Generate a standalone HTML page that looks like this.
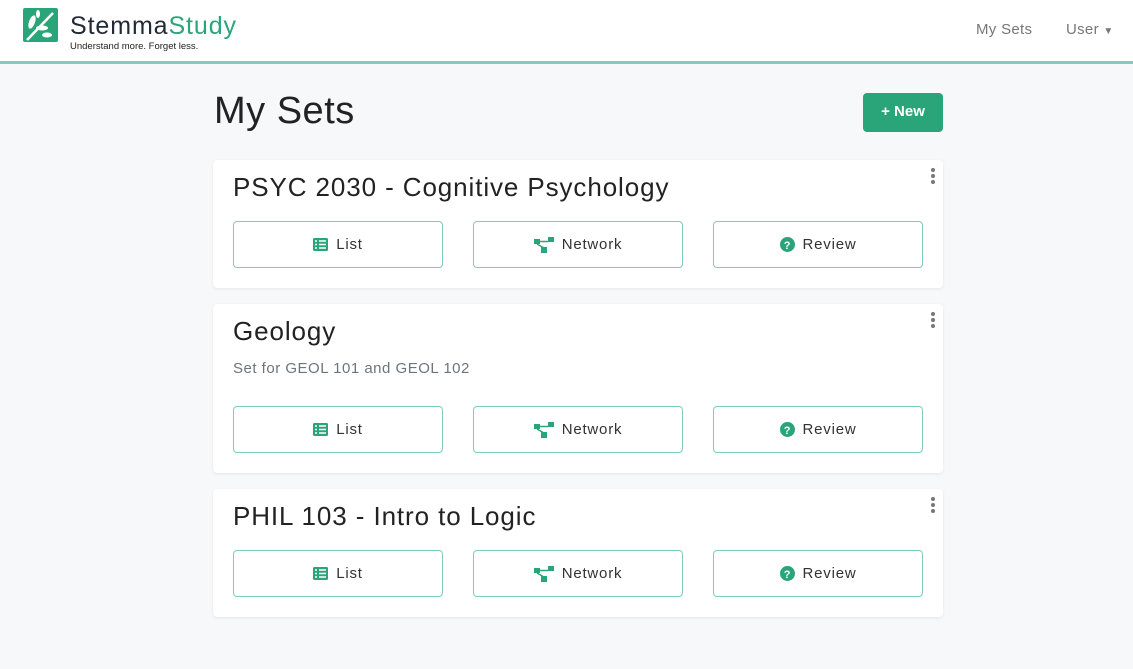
<!DOCTYPE html>
<html><head><style>
*{box-sizing:border-box;margin:0;padding:0}
body{width:1133px;height:669px;background:#f7f8fa;font-family:"Liberation Sans",sans-serif;color:#212529;position:relative;overflow:hidden}
.nav{position:absolute;left:0;top:0;width:1133px;height:64px;background:#fff;border-bottom:3px solid #7ecbc0}
.brand{position:absolute;left:70px;top:12px;font-size:25px;color:#222a35;letter-spacing:.9px}
.brand span{color:#2aa57a}
.tag{position:absolute;left:70px;top:41px;font-size:9.5px;color:#222}
.nl{position:absolute;top:21px;font-size:15px;color:#777;letter-spacing:.3px}
h1{position:absolute;left:214px;top:90px;font-size:38px;font-weight:400;color:#222;letter-spacing:.5px}
.new{position:absolute;left:863px;top:93px;width:80px;height:39px;background:#2aa57a;border-radius:4px;color:#fff;font-size:15px;font-weight:bold;text-align:center;line-height:38px}
.card{position:absolute;left:213px;width:730px;background:#fff;border-radius:4px;box-shadow:0 1px 3px rgba(0,0,0,.08)}
.card h2{position:absolute;left:20px;top:12px;font-size:26px;font-weight:400;color:#222;letter-spacing:.9px}
.desc{position:absolute;left:20px;top:56px;font-size:15px;color:#6c757d;letter-spacing:.5px}
.dots{position:absolute;right:8px;top:8px;width:4px}
.dots i{display:block;width:4px;height:4px;border-radius:2px;background:#777;margin-bottom:2px}
.b{position:absolute;width:210px;height:47px;border:1px solid #7ecbc0;border-radius:4px;font-size:15px;color:#333;display:flex;align-items:center;justify-content:center;gap:8px;letter-spacing:.8px}
</style></head><body>
<div class="nav">
<svg style="position:absolute;left:23px;top:8px" width="35" height="34" viewBox="0 0 35 34"><rect width="35" height="34" rx="2" fill="#2aa57a"/><path d="M4 32 L30 5" stroke="#fff" stroke-width="2.5"/><ellipse cx="9" cy="14" rx="3" ry="7" fill="#fff" transform="rotate(20 9 14)"/><ellipse cx="19" cy="20" rx="6" ry="2.5" fill="#fff"/><ellipse cx="24" cy="27" rx="5" ry="2.5" fill="#fff"/><ellipse cx="15" cy="6" rx="2" ry="4" fill="#fff"/></svg>
<div class="brand">Stemma<span>Study</span></div>
<div class="tag">Understand more. Forget less.</div>
<div class="nl" style="left:976px">My Sets</div>
<div class="nl" style="left:1066px">User <span style="font-size:10px">▼</span></div>
</div>
<h1>My Sets</h1>
<div class="new">+ New</div>

<div class="card" style="top:160px;height:128px"><h2>PSYC 2030 - Cognitive Psychology</h2><div class="dots"><i></i><i></i><i></i></div>
<div class="b" style="left:20px;top:61px"><svg width="15" height="13"><rect width="15" height="13" rx="1.5" fill="#2aa57a"/><path d="M2 3h2M2 6.5h2M2 10h2M6 3h7M6 6.5h7M6 10h7" stroke="#fff" stroke-width="1.6"/></svg>List</div>
<div class="b" style="left:260px;top:61px"><svg width="20" height="16"><rect x="0" y="2" width="6" height="5" fill="#2aa57a"/><rect x="14" y="0" width="6" height="5" fill="#2aa57a"/><rect x="7" y="10" width="6" height="6" fill="#2aa57a"/><path d="M6 4.5h8M3 7l7 4" stroke="#2aa57a" stroke-width="1.5"/></svg>Network</div>
<div class="b" style="left:500px;top:61px"><svg width="15" height="15"><circle cx="7.5" cy="7.5" r="7.5" fill="#2aa57a"/><text x="7.5" y="12" font-size="11" font-weight="bold" fill="#fff" text-anchor="middle" font-family="Liberation Sans">?</text></svg>Review</div>
</div>

<div class="card" style="top:304px;height:169px"><h2>Geology</h2><div class="desc">Set for GEOL 101 and GEOL 102</div><div class="dots"><i></i><i></i><i></i></div>
<div class="b" style="left:20px;top:102px"><svg width="15" height="13"><rect width="15" height="13" rx="1.5" fill="#2aa57a"/><path d="M2 3h2M2 6.5h2M2 10h2M6 3h7M6 6.5h7M6 10h7" stroke="#fff" stroke-width="1.6"/></svg>List</div>
<div class="b" style="left:260px;top:102px"><svg width="20" height="16"><rect x="0" y="2" width="6" height="5" fill="#2aa57a"/><rect x="14" y="0" width="6" height="5" fill="#2aa57a"/><rect x="7" y="10" width="6" height="6" fill="#2aa57a"/><path d="M6 4.5h8M3 7l7 4" stroke="#2aa57a" stroke-width="1.5"/></svg>Network</div>
<div class="b" style="left:500px;top:102px"><svg width="15" height="15"><circle cx="7.5" cy="7.5" r="7.5" fill="#2aa57a"/><text x="7.5" y="12" font-size="11" font-weight="bold" fill="#fff" text-anchor="middle" font-family="Liberation Sans">?</text></svg>Review</div>
</div>

<div class="card" style="top:489px;height:128px"><h2>PHIL 103 - Intro to Logic</h2><div class="dots"><i></i><i></i><i></i></div>
<div class="b" style="left:20px;top:61px"><svg width="15" height="13"><rect width="15" height="13" rx="1.5" fill="#2aa57a"/><path d="M2 3h2M2 6.5h2M2 10h2M6 3h7M6 6.5h7M6 10h7" stroke="#fff" stroke-width="1.6"/></svg>List</div>
<div class="b" style="left:260px;top:61px"><svg width="20" height="16"><rect x="0" y="2" width="6" height="5" fill="#2aa57a"/><rect x="14" y="0" width="6" height="5" fill="#2aa57a"/><rect x="7" y="10" width="6" height="6" fill="#2aa57a"/><path d="M6 4.5h8M3 7l7 4" stroke="#2aa57a" stroke-width="1.5"/></svg>Network</div>
<div class="b" style="left:500px;top:61px"><svg width="15" height="15"><circle cx="7.5" cy="7.5" r="7.5" fill="#2aa57a"/><text x="7.5" y="12" font-size="11" font-weight="bold" fill="#fff" text-anchor="middle" font-family="Liberation Sans">?</text></svg>Review</div>
</div>
</body></html>
